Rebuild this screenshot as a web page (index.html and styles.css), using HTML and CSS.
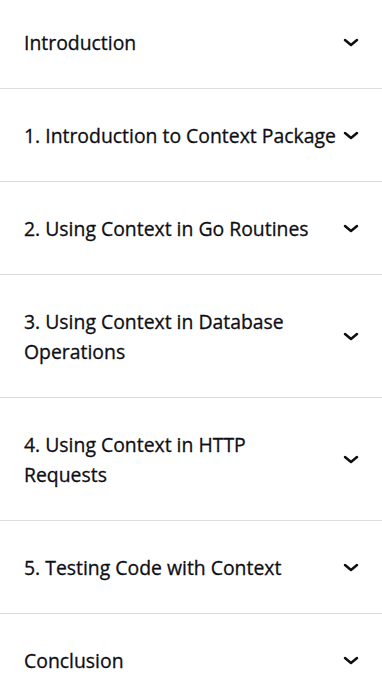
FILE: index.html
```html
<!DOCTYPE html>
<html lang="en">
<head>
    <meta charset="UTF-8">
    <meta name="viewport" content="width=device-width, initial-scale=1.0">
    <title>Contents</title>
    <link rel="stylesheet" href="styles.css">
</head>
<body>
    <div class="accordion">
        <div class="item">
            <span class="title">Introduction</span>
            <svg class="chevron" viewBox="0 0 16 10"><path d="M2 2l6 5 6-5"/></svg>
        </div>
        <div class="item">
            <span class="title">1. Introduction to Context Package</span>
            <svg class="chevron" viewBox="0 0 16 10"><path d="M2 2l6 5 6-5"/></svg>
        </div>
        <div class="item">
            <span class="title">2. Using Context in Go Routines</span>
            <svg class="chevron" viewBox="0 0 16 10"><path d="M2 2l6 5 6-5"/></svg>
        </div>
        <div class="item">
            <span class="title">3. Using Context in Database Operations</span>
            <svg class="chevron" viewBox="0 0 16 10"><path d="M2 2l6 5 6-5"/></svg>
        </div>
        <div class="item">
            <span class="title">4. Using Context in HTTP<br>Requests</span>
            <svg class="chevron" viewBox="0 0 16 10"><path d="M2 2l6 5 6-5"/></svg>
        </div>
        <div class="item">
            <span class="title">5. Testing Code with Context</span>
            <svg class="chevron" viewBox="0 0 16 10"><path d="M2 2l6 5 6-5"/></svg>
        </div>
        <div class="item">
            <span class="title">Conclusion</span>
            <svg class="chevron" viewBox="0 0 16 10"><path d="M2 2l6 5 6-5"/></svg>
        </div>
    </div>
</body>
</html>
```

FILE: styles.css
```css
body {
    margin: 0;
    background: #fff;
    font-family: "Open Sans", "Noto Sans", sans-serif;
    color: #0e0e14;
}
.accordion {
    margin-top: -4px;
}
.item {
    display: flex;
    align-items: center;
    padding: 32px 23px 30px 24px;
    border-bottom: 1px solid #dcdcdc;
    font-size: 19.4px;
    line-height: 30px;
    -webkit-text-stroke: 0.3px #0e0e14;
}
.title {
    flex: 1;
    min-width: 0;
    padding-right: 4px;
}
.chevron {
    width: 16px;
    height: 10px;
    flex-shrink: 0;
    fill: none;
    stroke: #0e0e14;
    stroke-width: 2.5;
    stroke-linecap: round;
    stroke-linejoin: round;
}
```
